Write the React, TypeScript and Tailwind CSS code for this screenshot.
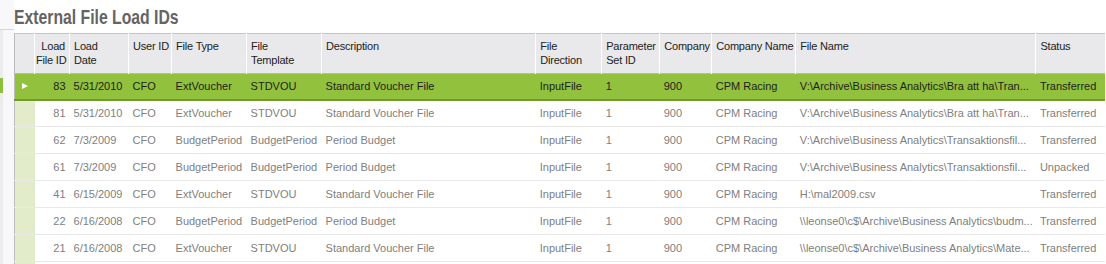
import React from 'react'

type Row = {
  id: number
  date: string
  user: string
  type: string
  template: string
  desc: string
  dir: string
  param: string
  company: string
  companyName: string
  fileName: string
  status: string
}

const rows: Row[] = [
  { id: 83, date: '5/31/2010', user: 'CFO', type: 'ExtVoucher', template: 'STDVOU', desc: 'Standard Voucher File', dir: 'InputFile', param: '1', company: '900', companyName: 'CPM Racing', fileName: 'V:\\Archive\\Business Analytics\\Bra att ha\\Tran...', status: 'Transferred' },
  { id: 81, date: '5/31/2010', user: 'CFO', type: 'ExtVoucher', template: 'STDVOU', desc: 'Standard Voucher File', dir: 'InputFile', param: '1', company: '900', companyName: 'CPM Racing', fileName: 'V:\\Archive\\Business Analytics\\Bra att ha\\Tran...', status: 'Transferred' },
  { id: 62, date: '7/3/2009', user: 'CFO', type: 'BudgetPeriod', template: 'BudgetPeriod', desc: 'Period Budget', dir: 'InputFile', param: '1', company: '900', companyName: 'CPM Racing', fileName: 'V:\\Archive\\Business Analytics\\Transaktionsfil...', status: 'Transferred' },
  { id: 61, date: '7/3/2009', user: 'CFO', type: 'BudgetPeriod', template: 'BudgetPeriod', desc: 'Period Budget', dir: 'InputFile', param: '1', company: '900', companyName: 'CPM Racing', fileName: 'V:\\Archive\\Business Analytics\\Transaktionsfil...', status: 'Unpacked' },
  { id: 41, date: '6/15/2009', user: 'CFO', type: 'ExtVoucher', template: 'STDVOU', desc: 'Standard Voucher File', dir: 'InputFile', param: '1', company: '900', companyName: 'CPM Racing', fileName: 'H:\\mal2009.csv', status: 'Transferred' },
  { id: 22, date: '6/16/2008', user: 'CFO', type: 'BudgetPeriod', template: 'BudgetPeriod', desc: 'Period Budget', dir: 'InputFile', param: '1', company: '900', companyName: 'CPM Racing', fileName: '\\\\leonse0\\c$\\Archive\\Business Analytics\\budm...', status: 'Transferred' },
  { id: 21, date: '6/16/2008', user: 'CFO', type: 'ExtVoucher', template: 'STDVOU', desc: 'Standard Voucher File', dir: 'InputFile', param: '1', company: '900', companyName: 'CPM Racing', fileName: '\\\\leonse0\\c$\\Archive\\Business Analytics\\Mate...', status: 'Transferred' },
  { id: 0, date: '', user: '', type: '', template: '', desc: '', dir: '', param: '', company: '', companyName: '', fileName: '', status: '' },
]

const headers: { label: React.ReactNode; w: string; right?: boolean }[] = [
  { label: <>Load<br />File ID</>, w: 'w-[35px]', right: true },
  { label: <>Load<br />Date</>, w: 'w-[59px]' },
  { label: 'User ID', w: 'w-[43px]' },
  { label: 'File Type', w: 'w-[75px]' },
  { label: <>File<br />Template</>, w: 'w-[75px]' },
  { label: 'Description', w: 'w-[214px]' },
  { label: <>File<br />Direction</>, w: 'w-[66px]' },
  { label: <>Parameter<br />Set ID</>, w: 'w-[58px]' },
  { label: 'Company', w: 'w-[52px]' },
  { label: 'Company Name', w: 'w-[84px]' },
  { label: 'File Name', w: 'w-[240px]' },
  { label: 'Status', w: 'w-[69px]' },
]

export default function App() {
  return (
    <div className="w-[1106px] h-[264px] overflow-hidden bg-white flex font-['Liberation_Sans',Arial,sans-serif] text-[11px]">
      {/* left gutter */}
      <div className="w-[14px] shrink-0 flex flex-col bg-[#f8f8fa]">
        <div className="h-[30px] shrink-0 border-b border-[#d6d6d8]" />
        <div className="h-[48px] shrink-0 w-[3px] bg-[#ececee]" />
        <div className="h-[15px] shrink-0 w-[3px] bg-[#8cc03a]" />
        <div className="flex-1 w-[3px] bg-[#ececee]" />
      </div>

      <div className="flex flex-col">
        {/* title */}
        <h1 className="h-[33px] shrink-0 pt-[5px] whitespace-nowrap origin-left scale-x-[0.75] text-[21px] leading-[24px] font-bold text-[#646464]">
          External File Load IDs
        </h1>

        <table className="shrink-0 table-fixed border-collapse w-[1091px] border-l border-[#bdbdbd]">
          <thead>
            <tr className="h-[40px] bg-[#e9e8ea] border-t border-[#c4c4c4] border-b border-b-[#b9b9b9] text-[#222]">
              <th className="w-[20px] p-0" />
              {headers.map((h, i) => (
                <th
                  key={i}
                  className={`${h.w} align-top font-normal whitespace-nowrap leading-[14px] pt-[5px] border-l border-white tracking-[-0.2px] ${
                    h.right ? 'text-right pl-[1px] pr-[4px]' : 'text-left px-[4px]'
                  }`}
                >
                  {h.label}
                </th>
              ))}
            </tr>
          </thead>
          <tbody>
            {rows.map((r, i) => {
              const sel = i === 0
              return (
                <tr
                  key={i}
                  className={
                    sel
                      ? 'h-[26px] bg-[#92c13d] text-[#1e1e1e] border-b-2 border-[#6f9a2c]'
                      : 'h-[27px] bg-white text-[#808080] border-b border-[#e8e8e8]'
                  }
                >
                  <td className={sel ? 'p-0 bg-[#92c13d]' : 'p-0 bg-[#e2ecca]'}>
                    {sel && (
                      <svg width="20" height="10" viewBox="0 0 20 10" className="block">
                        <polygon points="7,2 13,5 7,8" fill="#ffffff" />
                      </svg>
                    )}
                  </td>
                  <td className="px-[4px] text-right whitespace-nowrap">{r.id || ''}</td>
                  <td className="px-[4px] whitespace-nowrap">{r.date}</td>
                  <td className="px-[4px] whitespace-nowrap">{r.user}</td>
                  <td className="px-[4px] whitespace-nowrap">{r.type}</td>
                  <td className="px-[4px] whitespace-nowrap">{r.template}</td>
                  <td className="px-[4px] whitespace-nowrap">{r.desc}</td>
                  <td className="px-[4px] whitespace-nowrap">{r.dir}</td>
                  <td className="px-[4px] whitespace-nowrap">{r.param}</td>
                  <td className="px-[4px] whitespace-nowrap">{r.company}</td>
                  <td className="px-[4px] whitespace-nowrap">{r.companyName}</td>
                  <td className="px-[4px] whitespace-nowrap overflow-hidden">{r.fileName}</td>
                  <td className="px-[4px] whitespace-nowrap">{r.status}</td>
                </tr>
              )
            })}
          </tbody>
        </table>
      </div>
    </div>
  )
}
